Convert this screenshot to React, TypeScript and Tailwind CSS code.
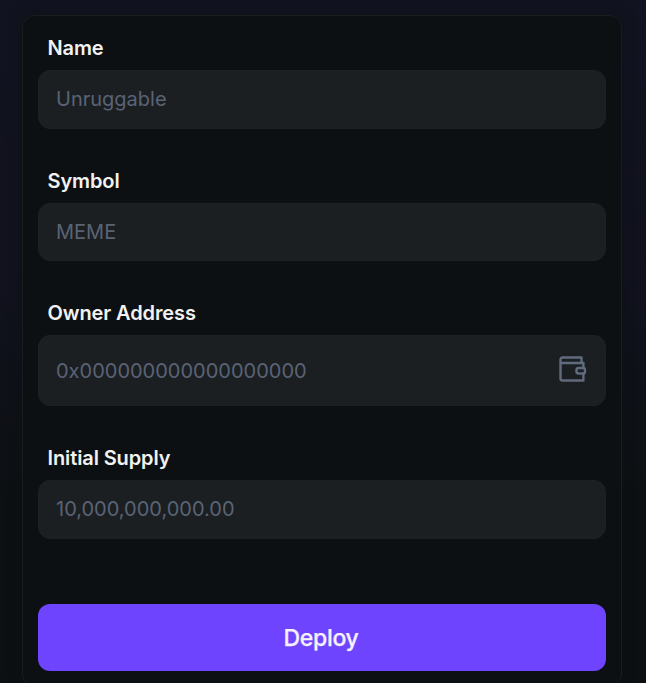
import type { ReactNode } from "react";

function WalletIcon() {
  return (
    <svg
      className="mb-[3px]"
      width="28"
      height="28"
      viewBox="0 0 28 28"
      fill="none"
      stroke="#616b7d"
      strokeWidth="2.4"
      strokeLinejoin="round"
    >
      <path d="M22.500 8V2.500H3.500A2 2 0 0 0 1.500 4.500V23.500a2 2 0 0 0 2 2H24.400V19M24.400 13V8H1.500" />
      <rect x="17.500" y="13" width="8.500" height="5.500" rx="2" />
    </svg>
  );
}

type FieldProps = {
  label: string;
  placeholder: string;
  height: string;
  icon?: ReactNode;
};

function Field({ label, placeholder, height, icon }: FieldProps) {
  return (
    <label className="flex flex-col">
      <span className="mb-[5px] pl-[9.500px] text-[20px] leading-[34px] font-semibold tracking-[-0.11px] text-[#f2f2f2]">
        {label}
      </span>
      <span className={`flex items-center rounded-xl border border-[#1e2122] bg-[#1b1f22] pr-[18px] pl-[17px] ${height}`}>
        <input
          className="min-w-0 flex-1 bg-transparent text-[20px] leading-[28px] text-white outline-none placeholder:text-[#5a6375]"
          placeholder={placeholder}
        />
        {icon}
      </span>
    </label>
  );
}

export default function App() {
  return (
    <main className="h-[683px] overflow-hidden bg-[linear-gradient(180deg,#121320_0%,#11121e_40%,#0d1013_72%,#0c1012_100%)] px-[22px] pt-[15px] font-['Inter',sans-serif]">
      <form className="flex h-[672px] w-[600px] flex-col rounded-[13px] border border-[#1a1c1e] bg-[#0c1012] px-[15px] pt-[15px] shadow-[0_0_14px_rgba(12,16,18,0.6)]">
        <Field label="Name" placeholder="Unruggable" height="h-[59px] pb-[2px]" />
        <div className="mt-[35px]">
          <Field label="Symbol" placeholder="MEME" height="h-[58px]" />
        </div>
        <div className="mt-[35px]">
          <Field label="Owner Address" placeholder="0x000000000000000000" height="h-[71px]" icon={<WalletIcon />} />
        </div>
        <div className="mt-[35px]">
          <Field label="Initial Supply" placeholder="10,000,000,000.00" height="h-[59px] pb-[2px]" />
        </div>
        <button
          type="button"
          className="mt-[65px] h-[67px] rounded-xl bg-[#6e44ff] pt-[1px] pr-[2px] text-[23px] font-medium tracking-[-0.33px] text-[#f5f1ff] [-webkit-text-stroke:0.25px_#f5f1ff]"
        >
          Deploy
        </button>
      </form>
    </main>
  );
}
